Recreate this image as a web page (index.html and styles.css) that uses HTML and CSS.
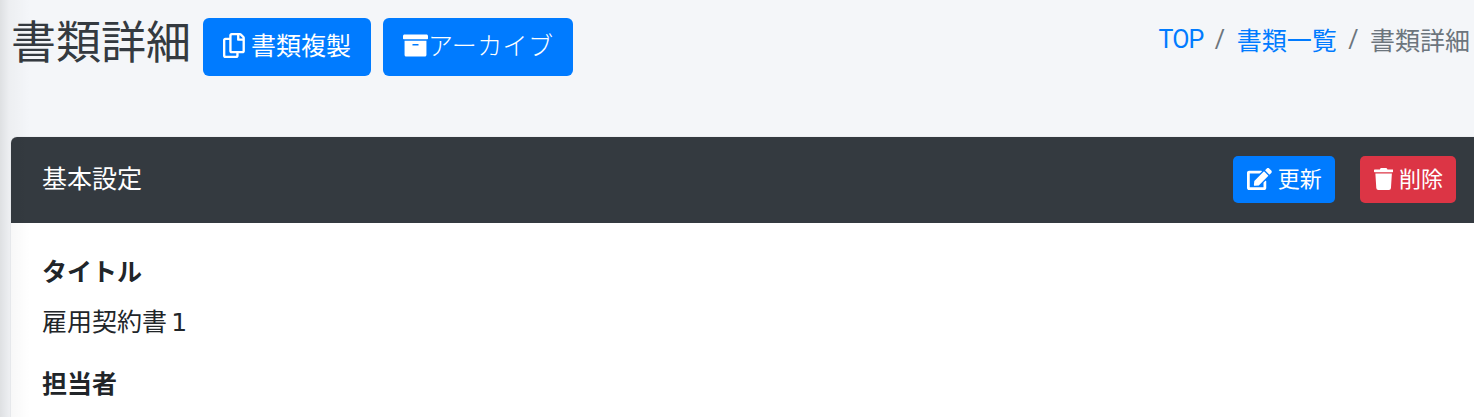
FILE: index.html
```html
<!DOCTYPE html>
<html lang="ja">
<head>
  <meta charset="UTF-8">
  <meta name="viewport" content="width=device-width, initial-scale=1.0">
  <title>書類詳細</title>
  <link rel="stylesheet" href="styles.css">
</head>
<body>
  <div class="sidebar-shadow"></div>
  <div class="wrapper">
    <div class="content-header">
      <div class="title-area">
        <h1>書類詳細</h1>
        <button class="btn btn-primary">
          <svg class="icon" viewBox="0 0 448 512"><path d="M433.941 65.941l-51.882-51.882A48 48 0 0 0 348.118 0H176c-26.51 0-48 21.49-48 48v48H48c-26.51 0-48 21.49-48 48v320c0 26.51 21.49 48 48 48h224c26.51 0 48-21.49 48-48v-48h80c26.51 0 48-21.49 48-48V99.882a48 48 0 0 0-14.059-33.941zM266 464H54a6 6 0 0 1-6-6V150a6 6 0 0 1 6-6h74v224c0 26.51 21.49 48 48 48h96v42a6 6 0 0 1-6 6zm128-96H182a6 6 0 0 1-6-6V54a6 6 0 0 1 6-6h106v88c0 13.255 10.745 24 24 24h88v202a6 6 0 0 1-6 6zm6-256h-64V48h9.632c1.591 0 3.117.632 4.243 1.757l48.368 48.368a6 6 0 0 1 1.757 4.243V112z"/></svg>
          書類複製
        </button>
        <button class="btn btn-primary btn-archive">
          <svg class="icon" viewBox="0 0 512 512"><path d="M32 448c0 17.7 14.3 32 32 32h384c17.7 0 32-14.3 32-32V160H32v288zm160-212c0-6.6 5.4-12 12-12h104c6.6 0 12 5.4 12 12v8c0 6.6-5.4 12-12 12H204c-6.6 0-12-5.4-12-12v-8zM480 32H32C14.3 32 0 46.3 0 64v48c0 8.8 7.2 16 16 16h480c8.8 0 16-7.2 16-16V64c0-17.7-14.3-32-32-32z"/></svg>
          アーカイブ
        </button>
      </div>
      <ol class="breadcrumb">
        <li><a class="top-link" href="#">TOP</a></li>
        <li class="sep">/</li>
        <li><a href="#">書類一覧</a></li>
        <li class="sep">/</li>
        <li class="active">書類詳細</li>
      </ol>
    </div>

    <div class="card">
      <div class="card-header">
        <h3 class="card-title">基本設定</h3>
        <div class="card-tools">
          <button class="btn btn-sm btn-primary">
            <svg class="icon" viewBox="0 0 576 512"><path d="M402.6 83.2l90.2 90.2c3.8 3.8 3.8 10 0 13.8L274.4 405.6l-92.8 10.3c-12.4 1.4-22.9-9.1-21.5-21.5l10.3-92.8L388.8 83.2c3.8-3.8 10-3.8 13.8 0zm162-22.9l-48.8-48.8c-15.2-15.2-39.9-15.2-55.2 0l-35.4 35.4c-3.8 3.8-3.8 10 0 13.8l90.2 90.2c3.8 3.8 10 3.8 13.8 0l35.4-35.4c15.2-15.3 15.2-40 0-55.2zM384 346.2V448H64V128h229.8c3.2 0 6.2-1.3 8.5-3.5l40-40c7.6-7.6 2.2-20.5-8.5-20.5H48C21.5 64 0 85.5 0 112v352c0 26.5 21.5 48 48 48h352c26.5 0 48-21.5 48-48V306.2c0-10.7-12.9-16-20.5-8.5l-40 40c-2.2 2.3-3.5 5.3-3.5 8.5z"/></svg>
            更新
          </button>
          <button class="btn btn-sm btn-danger">
            <svg class="icon" viewBox="0 0 448 512"><path d="M432 32H312l-9.4-18.7A24 24 0 0 0 281.1 0H166.8a23.72 23.72 0 0 0-21.4 13.3L136 32H16A16 16 0 0 0 0 48v32a16 16 0 0 0 16 16h416a16 16 0 0 0 16-16V48a16 16 0 0 0-16-16zM53.2 467a48 48 0 0 0 47.9 45h245.8a48 48 0 0 0 47.9-45L416 128H32z"/></svg>
            削除
          </button>
        </div>
      </div>
      <div class="card-body">
        <div class="field">
          <div class="field-label">タイトル</div>
          <div class="field-value">雇用契約書 <span class="num">1</span></div>
        </div>
        <div class="field">
          <div class="field-label">担当者</div>
        </div>
      </div>
    </div>
  </div>
</body>
</html>
```

FILE: styles.css
```css
* {
  margin: 0;
  padding: 0;
  box-sizing: border-box;
}

html, body {
  height: 100%;
  overflow: hidden;
}

body {
  font-family: Roboto, "Noto Sans CJK JP", sans-serif;
  font-size: 25px;
  font-weight: 400;
  font-kerning: none;
  background: #f4f6f9;
  color: #212529;
}

.sidebar-shadow {
  position: absolute;
  top: 0;
  left: 0;
  bottom: 0;
  width: 30px;
  background: linear-gradient(90deg, rgba(0, 0, 0, 0.09) 0%, rgba(0, 0, 0, 0.03) 30%, rgba(0, 0, 0, 0) 100%);
  pointer-events: none;
  z-index: 2;
}

.wrapper {
  padding: 18px 4px 0 11px;
}

.content-header {
  display: flex;
  justify-content: space-between;
  align-items: flex-start;
  height: 119px;
}

.title-area {
  display: flex;
  align-items: flex-start;
  gap: 12px;
}

h1 {
  font-size: 45px;
  font-weight: 400;
  line-height: 52px;
  color: #343a40;
}

.btn {
  display: inline-flex;
  align-items: center;
  justify-content: center;
  gap: 6px;
  height: 58px;
  padding: 0 20px 6px;
  border: none;
  border-radius: 6px;
  color: white;
  font-family: inherit;
  font-size: 25px;
  font-weight: 400;
  cursor: pointer;
}

.btn-primary {
  background: #007bff;
}

.btn-danger {
  background: #dc3545;
}

.btn-archive {
  gap: 0;
  font-weight: 300;
  letter-spacing: 0.4px;
}

.icon {
  height: 25px;
  margin-top: 3px;
  fill: white;
  flex-shrink: 0;
}

.btn-sm {
  height: 47px;
  gap: 6px;
  padding: 0 13px 5px 14px;
  font-size: 22px;
  border-radius: 5px;
}

.btn-sm .icon {
  height: 22px;
  margin-top: 4px;
}

.breadcrumb {
  display: flex;
  align-items: center;
  gap: 11.5px;
  list-style: none;
  height: 42px;
  color: #6c757d;
  font-size: 25px;
}

.breadcrumb a {
  color: #007bff;
  text-decoration: none;
}

.breadcrumb .top-link {
  letter-spacing: -1px;
}

.card {
  margin-right: -17px;
  background: white;
  border-radius: 6px 6px 0 0;
  box-shadow: 0 0 1px rgba(0, 0, 0, 0.3);
}

.card-header {
  display: flex;
  justify-content: space-between;
  align-items: center;
  height: 86px;
  padding: 0 31px 2px;
  background: #343a40;
  color: white;
  border-radius: 6px 6px 0 0;
}

.card-title {
  font-size: 25px;
  font-weight: 400;
  margin-bottom: 5px;
}

.card-tools {
  display: flex;
  gap: 25px;
}

.card-body {
  padding: 31px;
}

.field {
  margin-bottom: 25px;
}

.field-label {
  font-weight: 700;
  line-height: 37px;
  margin-bottom: 13px;
}

.field-value {
  line-height: 37px;
}

.num {
  font-family: "DejaVu Sans", sans-serif;
  font-size: 25px;
  margin-left: -2px;
}
```
